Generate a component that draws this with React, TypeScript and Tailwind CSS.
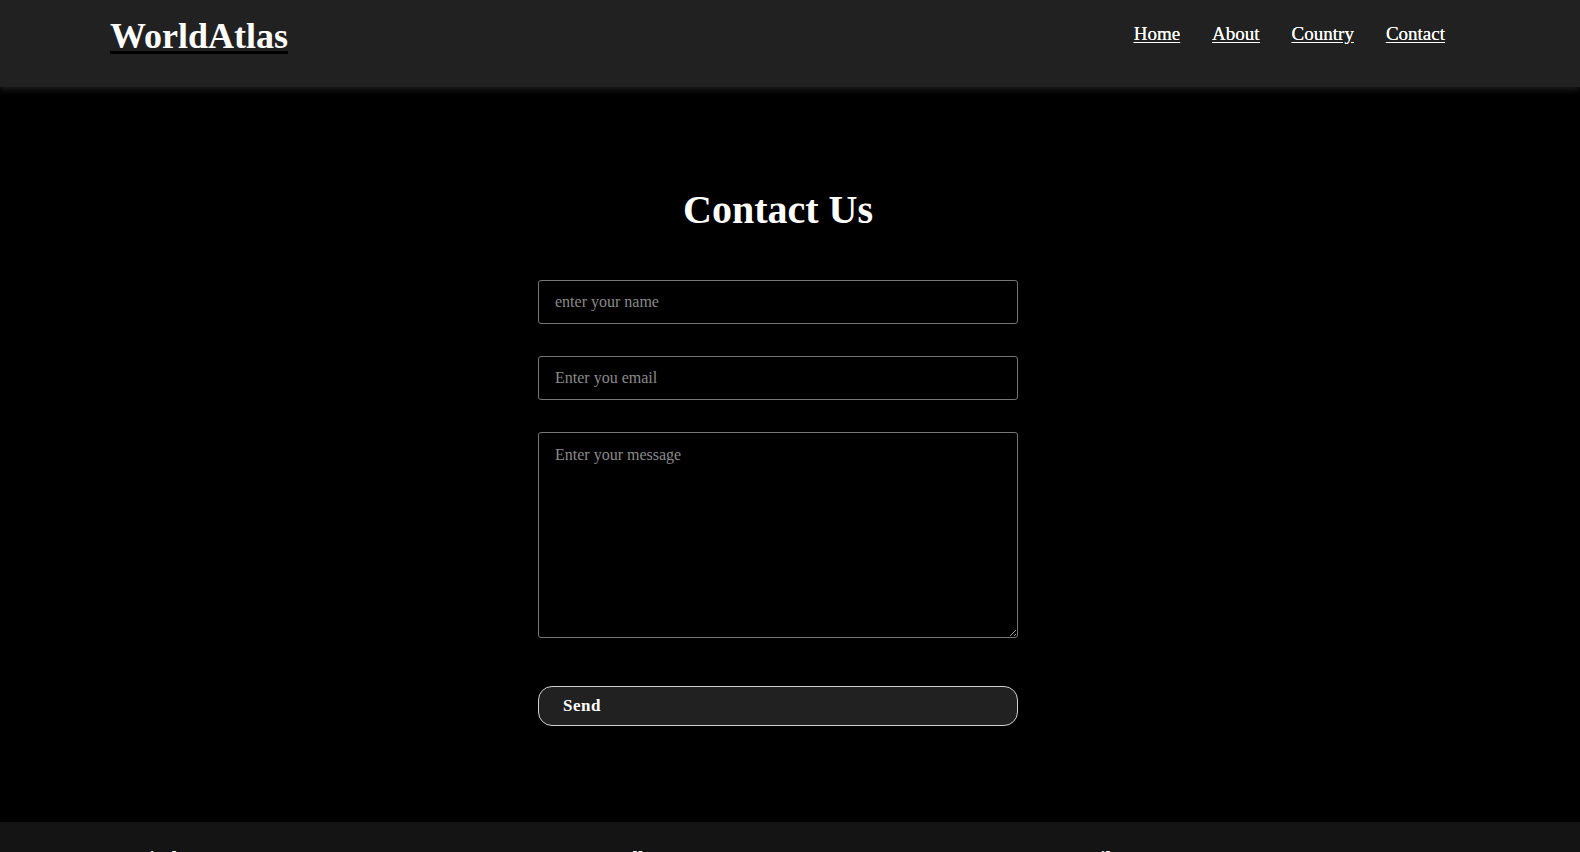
import { Phone } from 'lucide-react'

const navItems = ['Home', 'About', 'Country', 'Contact']

const serif = { fontFamily: '"Liberation Serif", "Times New Roman", serif' }

export default function App() {
  return (
    <div className="min-h-screen bg-black text-white" style={serif}>
      {/* Header */}
      <header className="relative z-10 h-[87px] bg-[#212121] shadow-[0_3px_6px_#1c1c1c]">
        <div className="flex h-full w-[1556px] items-start justify-between pl-[110px] pr-[111px]">
          <a
            href="#"
            className="mt-[16px] text-[36px] font-bold leading-[40px] text-white underline decoration-black decoration-[3px] underline-offset-[3px]"
          >
            WorldAtlas
          </a>
          <nav className="mt-[22px] flex items-center gap-8">
            {navItems.map((item) => (
              <a
                key={item}
                href="#"
                className="text-[19px] font-normal leading-6 text-white underline underline-offset-2 [text-shadow:0_0_0.4px_#fff]"
              >
                {item}
              </a>
            ))}
          </nav>
        </div>
      </header>

      {/* Contact form */}
      <main className="w-[1556px] pt-[100px] pb-[96px]">
        <h1 className="text-center text-[40px] font-bold leading-[46px]">Contact Us</h1>
        <form className="mx-auto mt-[47px] flex w-[480px] flex-col" onSubmit={(e) => e.preventDefault()}>
          <input
            type="text"
            placeholder="enter your name"
            className="h-[44px] rounded-[3px] border border-[#767676] bg-black px-4 text-[16px] text-white outline-none placeholder:text-[#8a8a8a]"
            style={serif}
          />
          <input
            type="email"
            placeholder="Enter you email"
            className="mt-8 h-[44px] rounded-[3px] border border-[#767676] bg-black px-4 text-[16px] text-white outline-none placeholder:text-[#8a8a8a]"
            style={serif}
          />
          <textarea
            placeholder="Enter your message"
            className="mt-8 h-[206px] rounded-[3px] border border-[#767676] bg-black px-4 py-[10px] text-[16px] text-white outline-none placeholder:text-[#8a8a8a]"
            style={serif}
          />
          <button
            type="submit"
            className="mt-12 h-[40px] rounded-[14px] border border-[#d0d0d0] bg-[#212121] pl-6 text-left text-[17px] font-bold tracking-[0.5px] text-white"
            style={serif}
          >
            Send
          </button>
        </form>
      </main>

      {/* Footer */}
      <footer className="bg-[#141414]">
        <div className="grid w-[1556px] grid-cols-[415px_519px_1fr] pl-[137px] pt-[26px] pb-10">
          <div>
            <p className="text-[20px] font-bold leading-[23px]">Find us</p>
            <p className="mt-1 text-[16px] text-[#aaa]">Kathmandu, Nepal</p>
          </div>
          <div className="flex items-start gap-4">
            <Phone className="mt-[4px] h-10 w-10 text-[#444]" />
            <div>
              <p className="text-[20px] font-bold leading-[23px]">Call us</p>
              <p className="mt-1 text-[16px] text-[#aaa]">+977 9800000000</p>
            </div>
          </div>
          <div>
            <p className="text-[20px] font-bold leading-[23px]">Mail us</p>
            <p className="mt-1 text-[16px] text-[#aaa]">worldatlas@gmail.com</p>
          </div>
        </div>
      </footer>
    </div>
  )
}
